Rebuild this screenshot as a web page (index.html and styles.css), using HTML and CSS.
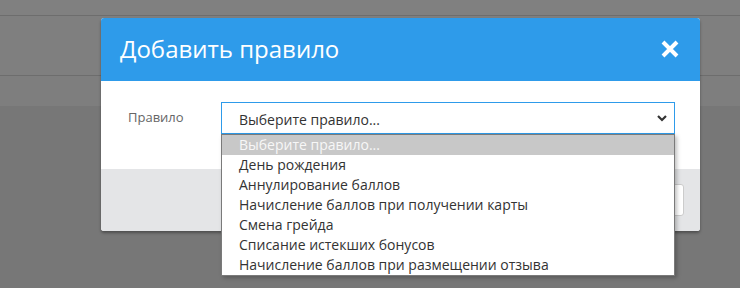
FILE: index.html
```html
<!DOCTYPE html>
<html lang="ru">
<head>
<meta charset="utf-8">
<link rel="stylesheet" href="styles.css">
</head>
<body>
<div class="page">
  <div class="topbar"></div>
  <div class="navbar"></div>
  <div class="subbar"></div>
  <div class="content"></div>
</div>
<div class="modal">
  <div class="modal-header">
    <h1 class="modal-title">Добавить правило</h1>
    <svg class="close" width="18" height="18" viewBox="0 0 18 18"><path d="M2 2 L16 16 M16 2 L2 16" stroke="#fff" stroke-width="4" stroke-linecap="butt"/></svg>
  </div>
  <div class="modal-body">
    <label class="field-label">Правило</label>
    <div class="select">
      <span class="select-value">Выберите правило...</span>
      <svg class="chevron" width="10" height="7" viewBox="0 0 10 7"><path d="M1 1 L5 5 L9 1" stroke="#333" stroke-width="2.2" fill="none"/></svg>
    </div>
  </div>
  <div class="modal-footer">
    <div class="btn"></div>
  </div>
  <ul class="options">
    <li class="option selected">Выберите правило...</li>
    <li class="option">День рождения</li>
    <li class="option">Аннулирование баллов</li>
    <li class="option">Начисление баллов при получении карты</li>
    <li class="option">Смена грейда</li>
    <li class="option">Списание истекших бонусов</li>
    <li class="option">Начисление баллов при размещении отзыва</li>
  </ul>
</div>
</body>
</html>
```

FILE: styles.css
```css
html, body {
  margin: 0;
  padding: 0;
}
body {
  width: 740px;
  height: 288px;
  overflow: hidden;
  background: #777777;
  font-family: "Open Sans", "Liberation Sans", sans-serif;
  position: relative;
}
.page {
  display: flex;
  flex-direction: column;
}
.topbar {
  height: 15px;
  background: #808080;
  border-bottom: 1px solid #6d6d6d;
}
.navbar {
  height: 59px;
  background: #7f7f7f;
  border-bottom: 1px solid #6d6d6d;
}
.subbar {
  height: 30px;
  background: #7e7e7e;
}
.content {
  flex: 1;
  background: #777777;
}
.modal {
  position: absolute;
  left: 101px;
  top: 18px;
  width: 599px;
  border-radius: 3px;
  box-shadow: 0 2px 3px rgba(0,0,0,0.35);
  background: #fff;
}
.modal-header {
  height: 63px;
  background: #2e9bea;
  border-radius: 3px 3px 0 0;
  display: flex;
  align-items: center;
  justify-content: space-between;
  padding: 0 21px 0 19px;
}
.modal-title {
  margin: 0;
  font-size: 24px;
  font-weight: 400;
  color: #fff;
  line-height: 1;
  padding-bottom: 2px;
}
.close {
  display: block;
  margin-top: -1px;
}
.modal-body {
  display: flex;
  align-items: center;
  padding: 21px 25px 35px 27px;
}
.field-label {
  width: 93px;
  font-size: 13px;
  color: #666;
  margin-top: -2px;
}
.select {
  flex: 1;
  height: 30px;
  border: 1px solid #2e9bea;
  display: flex;
  align-items: center;
  justify-content: space-between;
  padding: 0 7px 0 17px;
  box-sizing: content-box;
}
.select-value {
  font-size: 14px;
  color: #333;
  padding-top: 3px;
}
.chevron {
  display: block;
  margin-top: 1px;
}
.modal-footer {
  height: 62px;
  background: #e4e5e7;
  border-radius: 0 0 3px 3px;
  display: flex;
  align-items: center;
  justify-content: flex-end;
  padding: 0 16px;
}
.btn {
  width: 80px;
  height: 30px;
  background: #fff;
  border: 1px solid #ccc;
  border-radius: 3px;
}
.options {
  position: absolute;
  left: 120px;
  top: 116px;
  width: 452px;
  margin: 0;
  padding: 0;
  list-style: none;
  background: #fff;
  border: 1px solid #7a7a7a;
  box-shadow: 2px 2px 4px rgba(0,0,0,0.25);
}
.option {
  height: 20px;
  line-height: 20px;
  padding-left: 17px;
  font-size: 14px;
  color: #333;
  white-space: nowrap;
}
.option.selected {
  background: #c8c8c8;
  color: #f7f7f7;
}
```
